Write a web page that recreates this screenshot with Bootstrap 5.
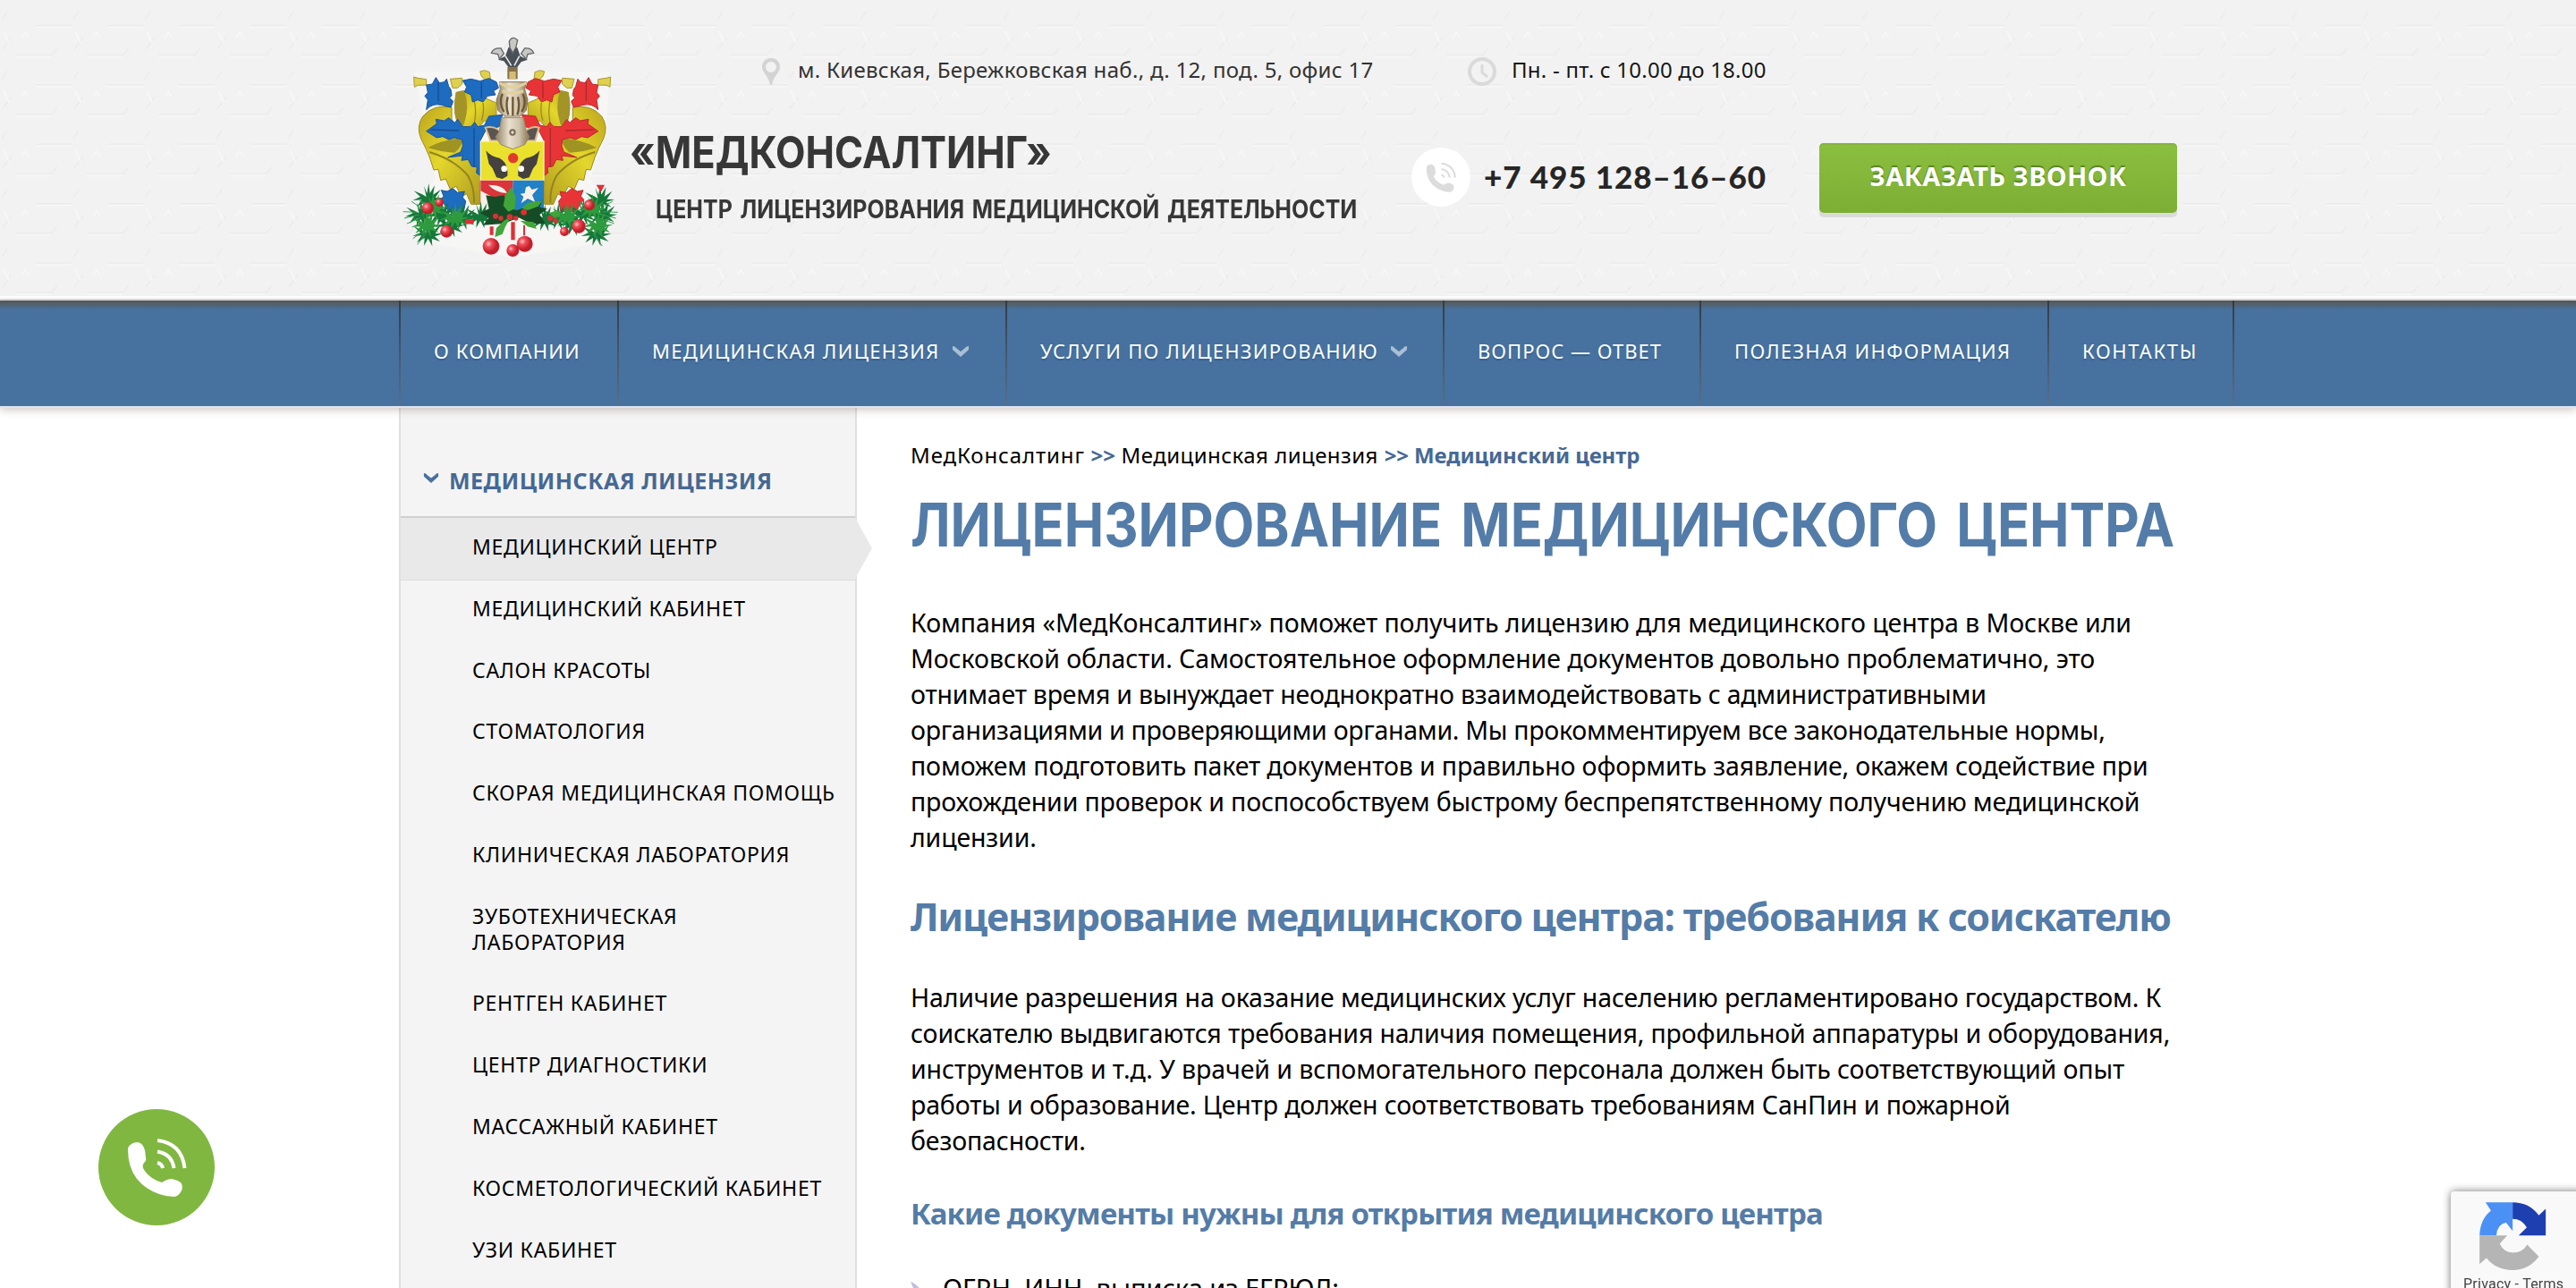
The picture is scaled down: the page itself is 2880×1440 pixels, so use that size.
<!DOCTYPE html>
<html lang="ru">
<head>
<meta charset="utf-8">
<meta name="viewport" content="width=device-width, initial-scale=1">
<title>Лицензирование медицинского центра</title>
<link href="https://cdn.jsdelivr.net/npm/bootstrap@5.3.0/dist/css/bootstrap.min.css" rel="stylesheet">
<style>
body{height:1440px;overflow:hidden;background:#fff;color:#000;font-family:"Noto Sans",sans-serif}
a{color:inherit;text-decoration:none}
.site-head{height:336px;background:#f2f2f2;border-bottom:2px solid #dcdcdc;box-shadow:inset 0 -3px #fff;padding-left:430px}
.head-tiles{z-index:0}
.crest{width:276px;height:290px;margin-top:20px;filter:blur(.7px)}
.head-info{width:1740px}
.addr-row{height:60px;margin-top:58px;font-size:24px;line-height:40px}
.addr-row svg{margin-top:6px}
.addr{margin-left:146px;width:789px;color:#333;letter-spacing:.3px}
.addr svg{margin-right:20px}
.hours{letter-spacing:.24px;color:#161616}
.hours svg{margin-right:17px}
.brand-col{width:872px;padding-top:22px;color:#373737;font-family:Inter,sans-serif;font-weight:700}
.brand-name,.brand-sub{white-space:nowrap;transform-origin:left}
.brand-name{font-size:50px;line-height:60px;transform:scaleX(.87);margin-left:-2px}
.brand-sub{font-size:28px;line-height:40px;margin:14px 0 0 27px;word-spacing:3px;transform:scaleX(.892)}
.tel{width:456px;padding-top:47px;color:#262626}
.tel svg{margin-right:15px}
.tel b{font:900 35px/64px Lato,sans-serif;letter-spacing:.945px}
.btn-call{width:400px;height:78px;margin-top:42px;border:0;border-radius:5px;background:linear-gradient(#8bbf40,#7dae34);box-shadow:inset 0 2px #83b43d,0 5px #dadbd9;color:#fff;font-size:29px;font-weight:700;line-height:40px;letter-spacing:.5px;padding:0 0 5px;text-shadow:0 -2px 1px #5b8123}
.btn-call:hover{color:#fff}
.main-nav{height:118px;padding:0 0 0 446px;background:linear-gradient(#53585a 0,#54606a 4px,#47719f 10px,#47719f);box-shadow:0 2px #dce6f2,0 4px 9px rgba(90,60,50,.3);z-index:2}
.main-nav .nav-link{height:118px;padding:0 0 0 37px;color:#fff;font-size:22px;line-height:113px;letter-spacing:1.28px;white-space:nowrap;text-shadow:0 2px 1px #36618e}
.main-nav .nav-item{border-left:2px solid;border-image:linear-gradient(#303b42,#47576a 50%,#56708c) 1}
.n1{width:244px}.n2{width:434px}.n3{width:489px}.n4{width:287px}.n5{width:389px}.n6{width:207px}.n7{width:2px}
.main-nav .n1 a{letter-spacing:1.15px}.main-nav .n4 a{letter-spacing:1px}.main-nav .n6 a{letter-spacing:1.65px}
.main-nav svg{margin-left:13px;margin-top:-4px}
.page-row{padding-left:446px;height:986px}
.side{width:512px;flex:none;background:#f4f4f4;border:solid #e0e0e0;border-width:0 2px}
.side-title{padding:63px 0 22px 25px;color:#466894;font-size:25px;font-weight:700;line-height:40px;letter-spacing:.48px;white-space:nowrap}
.side-title svg{margin-right:11px;margin-top:-12px}
.side li a{display:block;padding:18px 0 22px 80px;font-size:23px;line-height:28.8px;letter-spacing:.7px;white-space:nowrap}
.side .cur{position:relative;background:#e9e9e9;box-shadow:0 -2px #d0d0d0,0 1px #dedede}
.side .cur::after{content:"";position:absolute;left:508px;top:0;width:19px;height:68px;background:#e9e9e9;clip-path:polygon(0 0,100% 50%,0 100%)}
.content{padding:35px 0 0 60px;white-space:nowrap}
.crumbs{font-size:24px;line-height:40px;letter-spacing:.46px}
.crumbs b{color:#466894;letter-spacing:-.1px}
.crumbs .c0{letter-spacing:.88px}
.content h1{margin:18px 0 49px;font:700 67px/80px Inter,sans-serif;color:#547ca8;word-spacing:8px;transform:scaleX(.888);transform-origin:left}
.content h2{margin:39px 0 40px;font-size:43px;font-weight:700;line-height:60px;letter-spacing:-1.17px;color:#547ca8}
.content h3{margin:37px 0 38px;font-size:33px;font-weight:700;line-height:50px;letter-spacing:-.82px;color:#547ca8}
.content p{margin:0;font-size:28.5px;line-height:40px;letter-spacing:-.15px}
.ls-a{letter-spacing:-.08px}.ls-c{letter-spacing:-.23px}.ls-d{letter-spacing:-.29px}
.docs{font-size:29px;line-height:40px}
.docs svg{margin-right:26px}
.float-tel{left:110px;top:1240px}
.captcha{left:2740px;top:1332px;width:150px;height:120px;background:#f9f9f9;border-radius:4px;box-shadow:0 0 10px rgba(0,0,0,.55);font:16px/20px Roboto,sans-serif;color:#444;letter-spacing:.24px;padding:12px 0 0 14px}
.captcha svg{display:block;margin:0 0 6px 18px}
</style>
<script src="https://cdn.jsdelivr.net/npm/bootstrap@5.3.0/dist/js/bootstrap.bundle.min.js"></script>
</head>
<body>
<svg width="0" height="0" class="position-absolute">
  <defs>
    <symbol id="handset" viewBox="0 0 130 130">
      <path fill="currentColor" d="M33 45C33 40 39 37 44 37Q50 38 52 46L53 54Q54 57 52 59C50 61 49 63 50 66Q53 72 60 77Q66 81 71 82Q77 78 82 78Q88 79 92 82Q95 86 93 91Q90 97 85 98Q76 98 68 95Q53 90 43 78Q33 65 33 45Z"/>
      <g fill="none" stroke="currentColor" stroke-width="4"><path d="M66 60Q71 61 72 66M66 47.500Q82 50 84.500 66M66 35Q93 38 96.500 66"/></g>
    </symbol>
    <symbol id="chev" viewBox="0 0 20 14"><path fill="currentColor" d="M1 1Q4 1 5 3L10 7L15 3Q16 1 19 1V5L10 13L1 5Z"/></symbol>
    <pattern id="tiles" width="80" height="66.400" patternUnits="userSpaceOnUse">
      <g fill="none" stroke-width="1.500">
        <path stroke="#ebebeb" d="M40 28.500H80M17 61.500H57M2 22L8 13M3 55L13 42M57 62L64 54"/>
        <path stroke="#f8f8f8" d="M40 30.500H80M17 63.500H57M24 42L28 36L32 42M4 35L10 48"/>
      </g>
    </pattern>
  </defs>
</svg>

<header class="site-head position-relative d-flex">
  <svg class="head-tiles position-absolute top-0 start-0" width="2880" height="331"><rect width="2880" height="331" fill="url(#tiles)"/></svg>
  <svg class="crest position-relative flex-shrink-0" viewBox="0 0 828 870">
    <defs>
      <linearGradient id="gold" x2="1" y2="1"><stop stop-color="#bca51d"/><stop offset=".45" stop-color="#e4d72b"/><stop offset="1" stop-color="#b09c20"/></linearGradient>
      <linearGradient id="steel"><stop stop-color="#8d8064"/><stop offset=".4" stop-color="#e9e0cd"/><stop offset=".7" stop-color="#cfc4ad"/><stop offset="1" stop-color="#8a7753"/></linearGradient>
      <radialGradient id="ball" cx=".35" cy=".35"><stop stop-color="#ffc1bd"/><stop offset=".4" stop-color="#f0505a"/><stop offset="1" stop-color="#c21e2b"/></radialGradient>
      <g id="mantle">
        <path fill="url(#gold)" stroke="#9b8a21" stroke-width="3" d="M225 300Q165 288 128 330Q105 365 122 405Q140 440 150 465L165 510L180 508L188 545L205 540L220 575L240 565L258 600L275 590L290 625H320V500L250 380L225 340Z"/>
        <path fill="#9f9322" d="M145 435Q190 410 262 402Q262 430 235 452Q190 450 145 435Z"/>
        <path fill="none" stroke="#94841f" stroke-width="6" d="M150 450Q235 475 280 530Q302 570 300 620"/>
        <path fill="url(#gold)" stroke="#a29221" stroke-width="3" d="M240 250Q280 235 320 262L375 285V330L350 350L335 345L315 368L300 355L275 372L258 378Q225 330 240 250Z"/>
        <path fill="#a39428" d="M240 250L268 245Q285 300 268 350L258 378Q222 330 240 250Z"/>
        <path fill="none" stroke="#9c8c20" stroke-width="4" d="M300 275Q310 315 300 355M330 285Q335 315 325 345"/>
      </g>
      <g id="leaves">
        <path d="M140 308L145 275L135 262L145 250L140 225L160 222L172 200L184 218L200 215L208 205L215 230L222 240L225 260L218 268L230 280L222 300L190 292Q160 285 140 308Z"/>
        <path d="M262 210L290 205L320 212L350 203L375 215L382 235L365 245L372 258L345 262L330 282L312 275L295 282L290 258L268 248L275 232Z"/>
        <path d="M140 380L175 355L172 340L200 345L215 335L235 352L245 340L262 365L290 365L302 350L312 365L335 360L350 330L395 325L385 365L340 375L322 410V530L308 520L310 500L292 498L280 475L258 478L262 462L212 468L255 450L262 430L260 408L235 402L215 408L195 398L175 402Z"/>
        <path d="M190 578L210 582L228 572L245 586L268 582L262 602L272 615L265 650H215L200 625L188 610L198 598Z"/>
      </g>
      <g id="horn" fill="#dfd050" stroke="#a8982d" stroke-width="3"><path d="M98 198L112 202L140 206V225L112 226L100 232Z"/><path d="M220 205L260 202V222L245 235H228Z"/><path d="M320 180L335 176L352 182L355 205L345 215L325 196Z"/></g>
      <path id="twig" d="M0 0L-8 -36L2 -12L8 -45L12 -12L28 -38L22 -6L48 -24L30 3L56 4L28 13L46 30L18 20L20 46L6 20L-8 44L-6 18L-32 34L-16 10L-46 12L-20 0L-42 -20L-14 -8Z"/>
    </defs>
    <path fill="#f6f6f5" d="M98 180H756L740 400L690 540L770 640L740 750L430 805L120 750L90 640L170 540Z"/>
    <use href="#horn"/><use href="#horn" transform="matrix(-1 0 0 1 856 0)"/>
    <use href="#mantle"/><use href="#mantle" transform="matrix(-1 0 0 1 856 0)"/>
    <use href="#leaves" fill="#1d6cc0" stroke="#1a529b" stroke-width="3"/>
    <g transform="matrix(-1 0 0 1 856 0)"><use href="#leaves" fill="#e93437" stroke="#b82a2c" stroke-width="3"/></g>
    <g fill="none" stroke-width="4"><path stroke="#174d91" d="M180 215V280M325 215V270M155 375L250 378M300 370V500"/><path stroke="#ad292c" d="M676 215V280M531 215V270M701 375L606 378M556 370V500"/></g>
    <path fill="#eae12e" stroke="#fff3b4" stroke-width="4" d="M322 414H534V545H322Z"/>
    <path fill="#d9353b" d="M322 545H430V650H322Z"/><path fill="#2180c6" d="M430 545H534V650H430Z"/>
    <path fill="#f5f1ea" d="M322 580L360 600V650H322ZM348 560Q400 560 410 588Q370 585 348 560ZM474 568L485 564L494 576L516 570L495 594L505 618L480 606L458 622L466 600L455 590L470 588Z"/>
    <g fill="#45413f"><path d="M340 445Q355 465 385 470Q415 485 412 530L395 540L375 535L362 505L350 490Z"/><path d="M520 445Q505 465 475 470Q445 485 448 530L465 540L485 535L498 505L510 490Z"/></g>
    <g fill="#fff"><circle cx="401" cy="506" r="10"/><circle cx="458" cy="506" r="10"/></g><circle cx="431" cy="470" r="17" fill="#e2392e"/>
    <path fill="#5c5452" stroke="#d6bd8c" stroke-width="6" d="M338 368Q370 360 392 385L400 412H355Q345 385 338 368ZM518 368Q490 360 466 385L458 412H505Q512 385 518 368Z"/>
    <path fill="url(#steel)" stroke="#9e8860" stroke-width="3" d="M392 335H466L475 380L485 400L470 425L430 440L390 425L372 400L385 380Z"/>
    <path fill="url(#steel)" stroke="#8b7650" stroke-width="3" d="M385 215H475L470 240L480 275L475 310L455 330H402L380 310L375 275L388 240Z"/>
    <path fill="none" stroke="#6f5630" stroke-width="7" d="M395 255Q382 285 400 315M413 265Q405 295 415 325M430 265V328M447 265Q455 295 445 325M464 255Q478 285 460 315"/>
    <path fill="none" stroke="#e3d19b" stroke-width="9" d="M385 218Q430 245 475 218M395 245Q430 262 465 245"/>
    <circle cx="429" cy="384" r="11" fill="#776957"/><circle cx="429" cy="384" r="5" fill="#e6ddca"/>
    <path fill="#857048" d="M412 165H446V205H412Z"/><path fill="#d6bb78" d="M418 180H440V205H418Z"/>
    <path fill="#4a5058" d="M415 165L400 145L380 140L405 128L415 100L430 95L445 100L455 128L480 140L458 148L445 165Z"/>
    <g fill="#c8c9c4" stroke="#62666a" stroke-width="4"><path d="M418 78Q430 58 446 75L440 100L430 118L420 100Z"/><path d="M358 118Q365 100 390 102L400 120L385 138L380 122Z"/><path d="M500 118Q493 100 470 102L458 120L475 138L480 122Z"/></g>
    <path fill="none" stroke="#e5e7e5" stroke-width="5" d="M405 128L425 160M452 128L435 160"/>
    <g fill="#16773a">
      <use href="#twig" x="140" y="600"/><use href="#twig" x="115" y="655"/><use href="#twig" x="140" y="720"/><use href="#twig" x="185" y="655"/><use href="#twig" x="215" y="690"/><use href="#twig" x="255" y="665"/><use href="#twig" x="315" y="660"/>
      <use href="#twig" x="715" y="605"/><use href="#twig" x="724" y="655"/><use href="#twig" x="705" y="720"/><use href="#twig" x="660" y="650"/><use href="#twig" x="625" y="685"/><use href="#twig" x="575" y="665"/><use href="#twig" x="530" y="670"/>
    </g>
    <g fill="none" stroke="#3b9d55" stroke-width="3"><path d="M62 650L110 652M66 672L115 660M75 690L120 670M90 615L125 640M95 740L135 712M110 760L140 722M782 652L730 650M776 672L730 660M770 690L722 672M765 615L722 640M745 745L708 712M730 765L700 722"/></g>
    <g fill="#2d9b3d"><use href="#twig" x="155" y="630"/><use href="#twig" x="230" y="665"/><use href="#twig" x="135" y="690"/><use href="#twig" x="690" y="635"/><use href="#twig" x="605" y="660"/><use href="#twig" x="710" y="690"/></g>
    <path fill="#164c25" d="M340 595L370 600L400 595L420 640L445 645L470 635L530 610L520 635L545 640L520 660L540 690L490 690L450 670L400 690L330 695L350 670L320 655L350 640Z"/>
    <path fill="#41a53a" d="M425 568L440 600L437 640L415 650L398 630L405 595ZM480 620L530 612L515 632L480 645L460 638ZM370 735L375 705L400 680L425 665L405 700L395 725ZM550 655L580 645L590 660L570 670ZM455 680L500 685L510 708L480 700Z"/>
    <g fill="#de2f36"><circle cx="372" cy="665" r="9"/><circle cx="390" cy="672" r="8"/><circle cx="420" cy="668" r="10"/><circle cx="440" cy="672" r="8"/><circle cx="467" cy="652" r="10"/><circle cx="278" cy="683" r="9"/><circle cx="292" cy="683" r="8"/><circle cx="555" cy="672" r="9"/><circle cx="573" cy="680" r="8"/><path d="M353 700H365V728H353ZM424 685H437V745H424ZM465 695H471V730H465ZM710 560H738L725 585Z"/></g>
    <g fill="url(#ball)"><circle cx="145" cy="638" r="20"/><circle cx="184" cy="619" r="14"/><circle cx="208" cy="716" r="21"/><circle cx="357" cy="766" r="28"/><circle cx="430" cy="780" r="21"/><circle cx="470" cy="758" r="27"/><circle cx="603" cy="717" r="15"/><circle cx="651" cy="699" r="23"/><circle cx="687" cy="628" r="18"/></g>
  </svg>
  <div class="head-info position-relative flex-shrink-0">
    <div class="addr-row d-flex">
      <div class="addr d-flex">
        <svg width="20" height="32" viewBox="0 0 20 32"><path fill="#d3d3d3" fill-rule="evenodd" d="M10 1C4 1 0 5 0 11C0 17 7 20 9 31H11C13 20 20 17 20 11C20 5 16 1 10 1ZM10 5A5.500 5.500 0 1 1 10 17A5.500 5.500 0 1 1 10 5Z"/></svg>
        <span>м. Киевская, Бережковская наб., д. 12, под. 5, офис 17</span>
      </div>
      <div class="hours d-flex">
        <svg width="32" height="32" viewBox="0 0 32 32" fill="none" stroke="#dadada"><circle cx="16" cy="16" r="14" stroke-width="4"/><path stroke-width="3" d="M16 8V17L22 22"/></svg>
        <span>Пн. - пт. с 10.00 до 18.00</span>
      </div>
    </div>
    <div class="d-flex">
      <div class="brand-col">
        <div class="brand-name">«МЕДКОНСАЛТИНГ»</div>
        <div class="brand-sub">ЦЕНТР ЛИЦЕНЗИРОВАНИЯ МЕДИЦИНСКОЙ ДЕЯТЕЛЬНОСТИ</div>
      </div>
      <div class="tel d-flex">
        <svg width="66" height="66" viewBox="0 0 130 130" color="#dcdcdc"><circle cx="65" cy="65" r="65" fill="#fff"/><use href="#handset"/></svg>
        <b>+7 495 128–16–60</b>
      </div>
      <a class="btn btn-call d-flex align-items-center justify-content-center" href="#">ЗАКАЗАТЬ ЗВОНОК</a>
    </div>
  </div>
</header>

<nav class="main-nav position-relative">
  <ul class="nav flex-nowrap">
    <li class="nav-item n1"><a class="nav-link" href="#">О КОМПАНИИ</a></li>
    <li class="nav-item n2"><a class="nav-link" href="#">МЕДИЦИНСКАЯ ЛИЦЕНЗИЯ<svg width="20" height="14" color="#a9bfd6"><use href="#chev"/></svg></a></li>
    <li class="nav-item n3"><a class="nav-link" href="#">УСЛУГИ ПО ЛИЦЕНЗИРОВАНИЮ<svg width="20" height="14" color="#a9bfd6"><use href="#chev"/></svg></a></li>
    <li class="nav-item n4"><a class="nav-link" href="#">ВОПРОС — ОТВЕТ</a></li>
    <li class="nav-item n5"><a class="nav-link" href="#">ПОЛЕЗНАЯ ИНФОРМАЦИЯ</a></li>
    <li class="nav-item n6"><a class="nav-link" href="#">КОНТАКТЫ</a></li>
    <li class="nav-item n7"></li>
  </ul>
</nav>

<div class="page-row d-flex">
  <aside class="side">
    <div class="side-title"><svg width="18" height="13" color="#4a709d"><use href="#chev"/></svg>МЕДИЦИНСКАЯ ЛИЦЕНЗИЯ</div>
    <ul class="list-unstyled m-0">
      <li class="cur"><a href="#">МЕДИЦИНСКИЙ ЦЕНТР</a></li>
      <li><a href="#">МЕДИЦИНСКИЙ КАБИНЕТ</a></li>
      <li><a href="#">САЛОН КРАСОТЫ</a></li>
      <li><a href="#">СТОМАТОЛОГИЯ</a></li>
      <li><a href="#">СКОРАЯ МЕДИЦИНСКАЯ ПОМОЩЬ</a></li>
      <li><a href="#">КЛИНИЧЕСКАЯ ЛАБОРАТОРИЯ</a></li>
      <li><a href="#">ЗУБОТЕХНИЧЕСКАЯ<br>ЛАБОРАТОРИЯ</a></li>
      <li><a href="#">РЕНТГЕН КАБИНЕТ</a></li>
      <li><a href="#">ЦЕНТР ДИАГНОСТИКИ</a></li>
      <li><a href="#">МАССАЖНЫЙ КАБИНЕТ</a></li>
      <li><a href="#">КОСМЕТОЛОГИЧЕСКИЙ КАБИНЕТ</a></li>
      <li><a href="#">УЗИ КАБИНЕТ</a></li>
    </ul>
  </aside>
  <main class="content">
    <div class="crumbs"><a class="c0" href="#">МедКонсалтинг</a> <b>&gt;&gt;</b> <a href="#">Медицинская лицензия</a> <b>&gt;&gt; Медицинский центр</b></div>
    <h1>ЛИЦЕНЗИРОВАНИЕ МЕДИЦИНСКОГО ЦЕНТРА</h1>
    <p><span class="ls-a">Компания «МедКонсалтинг» поможет получить лицензию для медицинского центра в Москве или</span><br>
      <span class="ls-a">Московской области. Самостоятельное оформление документов довольно проблематично, это</span><br>
      <span class="ls-c">отнимает время и вынуждает неоднократно взаимодействовать с административными</span><br>
      <span class="ls-d">организациями и проверяющими органами. Мы прокомментируем все законодательные нормы,</span><br>
      поможем подготовить пакет документов и правильно оформить заявление, окажем содействие при<br>
      прохождении проверок и поспособствуем быстрому беспрепятственному получению медицинской<br>
      лицензии.</p>
    <h2>Лицензирование медицинского центра: требования к соискателю</h2>
    <p>Наличие разрешения на оказание медицинских услуг населению регламентировано государством. К<br>
      соискателю выдвигаются требования наличия помещения, профильной аппаратуры и оборудования,<br>
      <span class="ls-a">инструментов и т.д. У врачей и вспомогательного персонала должен быть соответствующий опыт</span><br>
      работы и образование. Центр должен соответствовать требованиям СанПин и пожарной<br>
      безопасности.</p>
    <h3>Какие документы нужны для открытия медицинского центра</h3>
    <div class="docs d-flex align-items-center"><svg width="10" height="14" viewBox="0 0 10 14"><path fill="#c3bddd" d="M0 0Q4 1 10 7Q4 13 0 14L3 7Z"/></svg>ОГРН, ИНН, выписка из ЕГРЮЛ;</div>
  </main>
</div>

<a class="float-tel position-fixed" href="#"><svg width="130" height="130" viewBox="0 0 130 130" color="#fff"><circle cx="65" cy="65" r="65" fill="#80b741"/><use href="#handset"/></svg></a>

<div class="captcha position-fixed">
  <svg width="75" height="76" viewBox="160 104 222 226"><path fill="#4a90f5" d="M180 105H270V200L248 172Q218 178 216 215H160Q162 160 198 132Z"/><path fill="#1d3faf" d="M270 105Q325 105 357 148L380 126V215H290L317 188Q300 160 270 160Z"/><path fill="#b5b5b5" d="M160 215H252L227 242Q240 270 270 272Q305 272 318 245L357 285Q325 330 270 330Q215 330 183 290L160 310Z"/></svg>
  Privacy - Terms
</div>
</body>
</html>
